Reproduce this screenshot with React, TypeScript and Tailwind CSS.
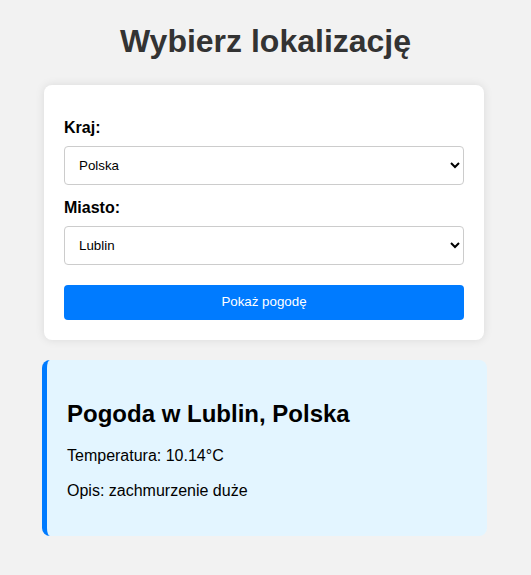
import { useState } from 'react'

const cities: Record<string, string[]> = {
  Polska: ['Warszawa', 'Kraków', 'Lublin', 'Gdańsk', 'Wrocław'],
  Niemcy: ['Berlin', 'Monachium', 'Hamburg'],
}

export default function App() {
  const [country, setCountry] = useState('Polska')
  const [city, setCity] = useState('Lublin')

  return (
    <div className="min-h-[575px] bg-[#f2f2f2] font-['Liberation_Sans',Arial,sans-serif] text-black">
      <h1 className="pt-[23px] text-center text-[32px] font-bold leading-[36.8px] text-[#333]">
        Wybierz lokalizację
      </h1>

      <div className="mt-[25px] ml-[44px] w-[440px] rounded-lg bg-white p-5 shadow-[0_0_10px_rgba(0,0,0,0.1)]">
        <label className="mt-[14px] mb-[9px] block text-base font-bold leading-[18px]">Kraj:</label>
        <select
          value={country}
          onChange={(e) => setCountry(e.target.value)}
          className="block h-[39px] w-full rounded border border-[#ccc] bg-white px-[10px] text-[13.33px] text-black"
        >
          {Object.keys(cities).map((c) => (
            <option key={c} value={c}>{c}</option>
          ))}
        </select>

        <label className="mt-[14px] mb-[9px] block text-base font-bold leading-[18px]">Miasto:</label>
        <select
          value={city}
          onChange={(e) => setCity(e.target.value)}
          className="block h-[39px] w-full rounded border border-[#ccc] bg-white px-[10px] text-[13.33px] text-black"
        >
          {cities[country].map((c) => (
            <option key={c} value={c}>{c}</option>
          ))}
        </select>

        <button className="mt-5 block h-[35px] w-full rounded bg-[#007bff] text-[13.33px] text-white">
          Pokaż pogodę
        </button>
      </div>

      <div className="mt-5 ml-[42px] w-[445px] rounded-lg border-l-[5px] border-[#007bff] bg-[#e3f5ff] p-5">
        <h2 className="my-[19.92px] text-2xl font-bold leading-[27.6px]">Pogoda w Lublin, Polska</h2>
        <p className="mb-4 text-base leading-[18.4px]">Temperatura: 10.14°C</p>
        <p className="mb-4 text-base leading-[18.4px]">Opis: zachmurzenie duże</p>
      </div>
    </div>
  )
}
